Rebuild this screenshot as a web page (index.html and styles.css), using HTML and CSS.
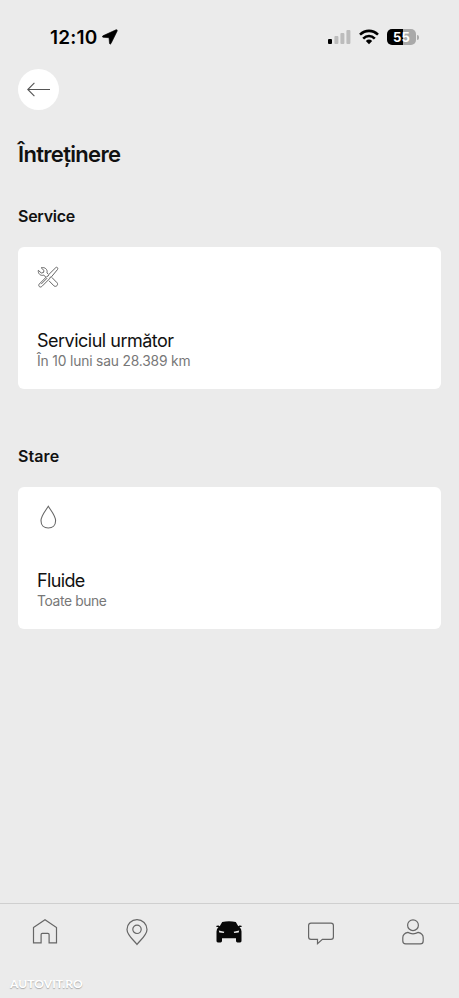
FILE: index.html
```html
<!DOCTYPE html>
<html lang="ro">
<head>
<meta charset="utf-8">
<meta name="viewport" content="width=device-width, initial-scale=1">
<title>Întreținere</title>
<link rel="stylesheet" href="styles.css">
</head>
<body>
<div class="app">
  <header class="status">
    <span class="clock">12:10</span>
    <svg class="location" width="16" height="16" viewBox="0 0 16 16"><path d="M14 .8.9 6.8Q-.2 7.9 1 8.3L7 8.7 7.5 14.4Q8 15.8 9 14.6L15.2 2Q15.5.3 14 .8Z"/></svg>
    <svg class="signal" width="23" height="15" viewBox="0 0 23 15"><rect x="0" y="9" width="4" height="5" rx="1"/><g fill="#bcbcbc"><rect x="6.4" y="6" width="4" height="8" rx="1"/><rect x="12.4" y="3" width="4" height="11" rx="1"/><rect x="18.4" y="0" width="4" height="14" rx="1"/></g></svg>
    <svg class="wifi" width="20" height="16" viewBox="0 0 20 16"><g fill="none" stroke="#000" stroke-width="2.6"><path d="M1 5.6Q5 1.9 10 1.9T19 5.6"/><path d="M4.2 9.6Q6.8 7 10 7T15.8 9.6"/></g><path d="M6.8 12Q10 9.2 13.2 12L10 15.2Z"/></svg>
    <span class="battery"><span class="level">55</span></span>
    <span class="battery-tip"></span>
  </header>
  <main class="content">
    <button class="back" aria-label="Înapoi"><svg width="25" height="15" viewBox="0 0 25 15"><path d="M24 7.5H1.8M8.4.9 1.8 7.5l6.6 6.6"/></svg></button>
    <h1 class="title">Întreținere</h1>
    <h2 class="section">Service</h2>
    <section class="card">
      <svg class="icon tools" width="22" height="22" viewBox="0 0 22 22">
        <path d="M9.1 11.4 6.8 9.2C3.5 10.1.9 7.7 1.3 4.3l3 2.7 2.2-.5.5-2L4.2 1.8C7.7.7 10.9 3.4 10 6.9l1.4 1.4M14.8 11.4l5.3 5.4c1.6 2-1.1 4.7-3.1 3.1l-5-5.1"/>
        <path d="M20.4 1.6c-.5-.5-1.1-.4-1.6 0l-7.1 7-.5 1.4-1.4.5-7.5 7.5c-1.6 1.8.7 4.1 2.5 2.5l7.7-7.7.5-1.4 1.4-.5 6.1-7.4c.4-.6.4-1.4-.1-1.9ZM4.2 18.1l6-6"/>
      </svg>
      <h3 class="card-title next">Serviciul următor</h3>
      <p class="detail interval">În 10 luni sau 28.389 km</p>
    </section>
    <h2 class="section second">Stare</h2>
    <section class="card">
      <svg class="icon drop" width="22" height="24" viewBox="0 0 22 24"><path d="M11.3 1.3C8.8 5.3 4 10.7 4 15.7c0 4.4 3 7.3 7.3 7.3s7.3-2.9 7.3-7.3C18.6 10.7 13.8 5.3 11.3 1.3Z"/></svg>
      <h3 class="card-title fluids">Fluide</h3>
      <p class="detail fine">Toate bune</p>
    </section>
  </main>
  <nav class="tabs">
    <svg class="tab" viewBox="0 0 28 28"><path d="M2.5 9.5 14 1.8l11.5 7.7v15.3h-7.4v-8.2q0-1.2-1.2-1.2h-5.6q-1.2 0-1.2 1.2v8.2H2.5Z"/></svg>
    <svg class="tab" viewBox="0 0 28 28"><path d="M14 26.4c-3.3-4.3-10-9.4-10-15a10 9.8 0 0 1 20 0c0 5.6-6.7 10.7-10 15Z"/><circle cx="14" cy="11.3" r="4.2"/></svg>
    <svg class="tab car" viewBox="0 0 28 28"><path fill-rule="evenodd" d="M7.2 4Q14 2.6 20.8 4l2.5 4.2 1.2-.7q2.4-.1 2.4 1.2l-2.4.5q2 1.5 2 4.2v9.7q0 1.4-1.4 1.4h-2.7q-1.3 0-1.4-1.4v-2.8H7v2.8q-.1 1.4-1.4 1.4H2.9q-1.4 0-1.4-1.4v-9.7q0-2.7 2-4.2l-2.4-.5q0-1.3 2.4-1.2l1.2.7ZM3.8 12.6l.5 1.9 4.5.4.5-1.2ZM24.2 12.6l-.5 1.9-4.5.4-.5-1.2Z"/></svg>
    <svg class="tab" viewBox="0 0 28 28"><path d="M4 5.1h20q2.4 0 2.4 2.4v11.4q0 2.4-2.4 2.4h-8.6l-4.9 4.4v-4.4H4q-2.4 0-2.4-2.4V7.5q0-2.4 2.4-2.4Z"/></svg>
    <svg class="tab" viewBox="0 0 28 28"><circle cx="14" cy="7.2" r="5.4"/><path d="M8.8 14.4q5.2 2.8 10.4 0c3.4.8 5 2.7 5 5.4v3.2q0 2.9-2.9 2.9H6.7q-2.9 0-2.9-2.9v-3.2c0-2.7 1.6-4.6 5-5.4Z"/></svg>
  </nav>
  <span class="watermark">AUTOVIT.RO</span>
</div>
</body>
</html>
```
FILE: styles.css
```css
* { box-sizing: border-box; margin: 0; padding: 0; }
body { background: #ebebeb; color: #111; font-family: Inter, sans-serif; }
.app { position: relative; display: flex; flex-direction: column; height: 998px; }
.status { display: flex; align-items: center; height: 69px; padding: 5px 40px 0 50px; }
.clock { width: 48px; font-size: 19px; font-weight: 600; letter-spacing: .2px; color: #000; white-space: nowrap; }
.location { margin-left: 4px; stroke: #000; stroke-width: .6; }
.signal { margin-left: auto; }
.wifi { margin-left: 8px; }
.battery { display: flex; align-items: center; justify-content: center; width: 29px; height: 16px; margin-left: 8px; border-radius: 5px; background: linear-gradient(90deg, #000 55%, #a9a9a9 55%); }
.level { color: #fff; font-size: 13px; font-weight: 700; line-height: 16px; letter-spacing: .3px; }
.battery-tip { width: 2px; height: 5px; margin-left: 1px; border-radius: 0 2px 2px 0; background: #aaa; }
.content { flex: 1; padding: 0 18px; }
.back { display: flex; align-items: center; justify-content: center; width: 41px; height: 41px; border: 0; border-radius: 50%; background: #fff; }
.back svg { fill: none; stroke: #555; stroke-width: 1.1; }
.title { margin-top: 30px; font-size: 22px; font-weight: 600; line-height: 28px; letter-spacing: -.68px; }
.section { margin-top: 38px; padding-top: 1px; font-size: 16px; font-weight: 600; line-height: 19px; letter-spacing: -.25px; }
.second { margin-top: 57px; letter-spacing: .1px; }
.card { height: 142px; margin-top: 21px; padding: 19px; border-radius: 6px; background: #fff; }
.icon { display: block; fill: none; stroke: #666; stroke-width: 1.1; }
.tools { stroke-width: 1; }
.drop { margin-top: -1px; margin-bottom: -1px; }
.card-title { margin-top: 41px; font-size: 18px; font-weight: 400; line-height: 24px; letter-spacing: -.5px; }
.fluids { letter-spacing: -.65px; }
.detail { margin-top: -1px; color: #777; font-size: 13.8px; line-height: 18px; letter-spacing: -.16px; }
.fine { letter-spacing: -.36px; }
.tabs { display: flex; justify-content: space-between; height: 95px; padding: 14px 32px 0 31px; border-top: 1px solid #cfcfcf; }
.tab { width: 28px; height: 28px; fill: none; stroke: #666; stroke-width: 1.2; }
.car { fill: #080808; stroke: none; }
.watermark { position: absolute; left: 10px; bottom: 6px; color: #fff; font: 700 12px/16px Lato, sans-serif; letter-spacing: .1px; text-shadow: 0 1px 1px #aaa; }
```
